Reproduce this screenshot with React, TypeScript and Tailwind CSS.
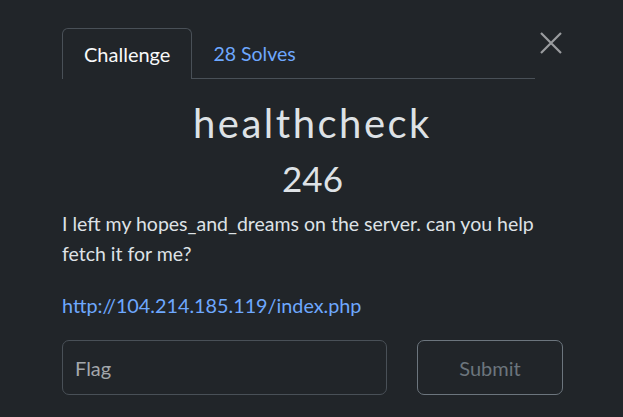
export default function App() {
  return (
    <div className="w-[623px] h-[417px] overflow-hidden bg-[#212529] text-[#dee2e6] font-['Lato','Liberation_Sans',sans-serif]">
      <div className="w-[501px] ml-[62px] pt-[28px]">
        {/* tabs + close */}
        <div className="flex items-start">
          <ul className="flex shrink-0 w-[473px] border-b border-[#495057] text-[20px] leading-[24px]">
            <li className="h-[51px] -mb-px px-[21px] pt-[13px] border border-b-0 border-[#495057] rounded-t-[6px] bg-[#212529] text-[#f8f9fa]">
              Challenge
            </li>
            <li className="h-[50px] px-[21px] pt-[14px] text-[19.5px] text-[#6ea8fe]">28 Solves</li>
          </ul>
          <button className="ml-[5px] mt-[4px] text-[#9a9c9f]">
            <svg width="22" height="22" viewBox="0 0 22 22" fill="none" stroke="currentColor" strokeWidth="2.2">
              <path d="M1 1 L21 21 M21 1 L1 21" />
            </svg>
          </button>
        </div>

        {/* title */}
        <h3 className="mt-[20px] text-center text-[40px] leading-[48px] tracking-[2.5px] text-[#dee2e6]">healthcheck</h3>
        <h4 className="mt-[10px] text-center text-[35px] leading-[42px] text-[#dee2e6]">246</h4>

        {/* description */}
        <p className="mt-[10px] text-[19.5px] leading-[30px] text-[#dee2e6]">
          I left my hopes_and_dreams on the server. can you help fetch it for me?
        </p>
        <p className="mt-[21px] text-[19.8px] leading-[30px] text-[#6ea8fe]">http://104.214.185.119/index.php</p>

        {/* flag form */}
        <div className="mt-[20px] flex gap-[30px]">
          <div className="w-[325px] h-[55px] rounded-[7px] border border-[#495057] flex items-center px-[12px] text-[20px] text-[#a3a7ab]">
            Flag
          </div>
          <button className="w-[146px] h-[55px] rounded-[7px] border border-[#6c757d] text-[20px] text-[#6c757d]">
            Submit
          </button>
        </div>
      </div>
    </div>
  );
}
